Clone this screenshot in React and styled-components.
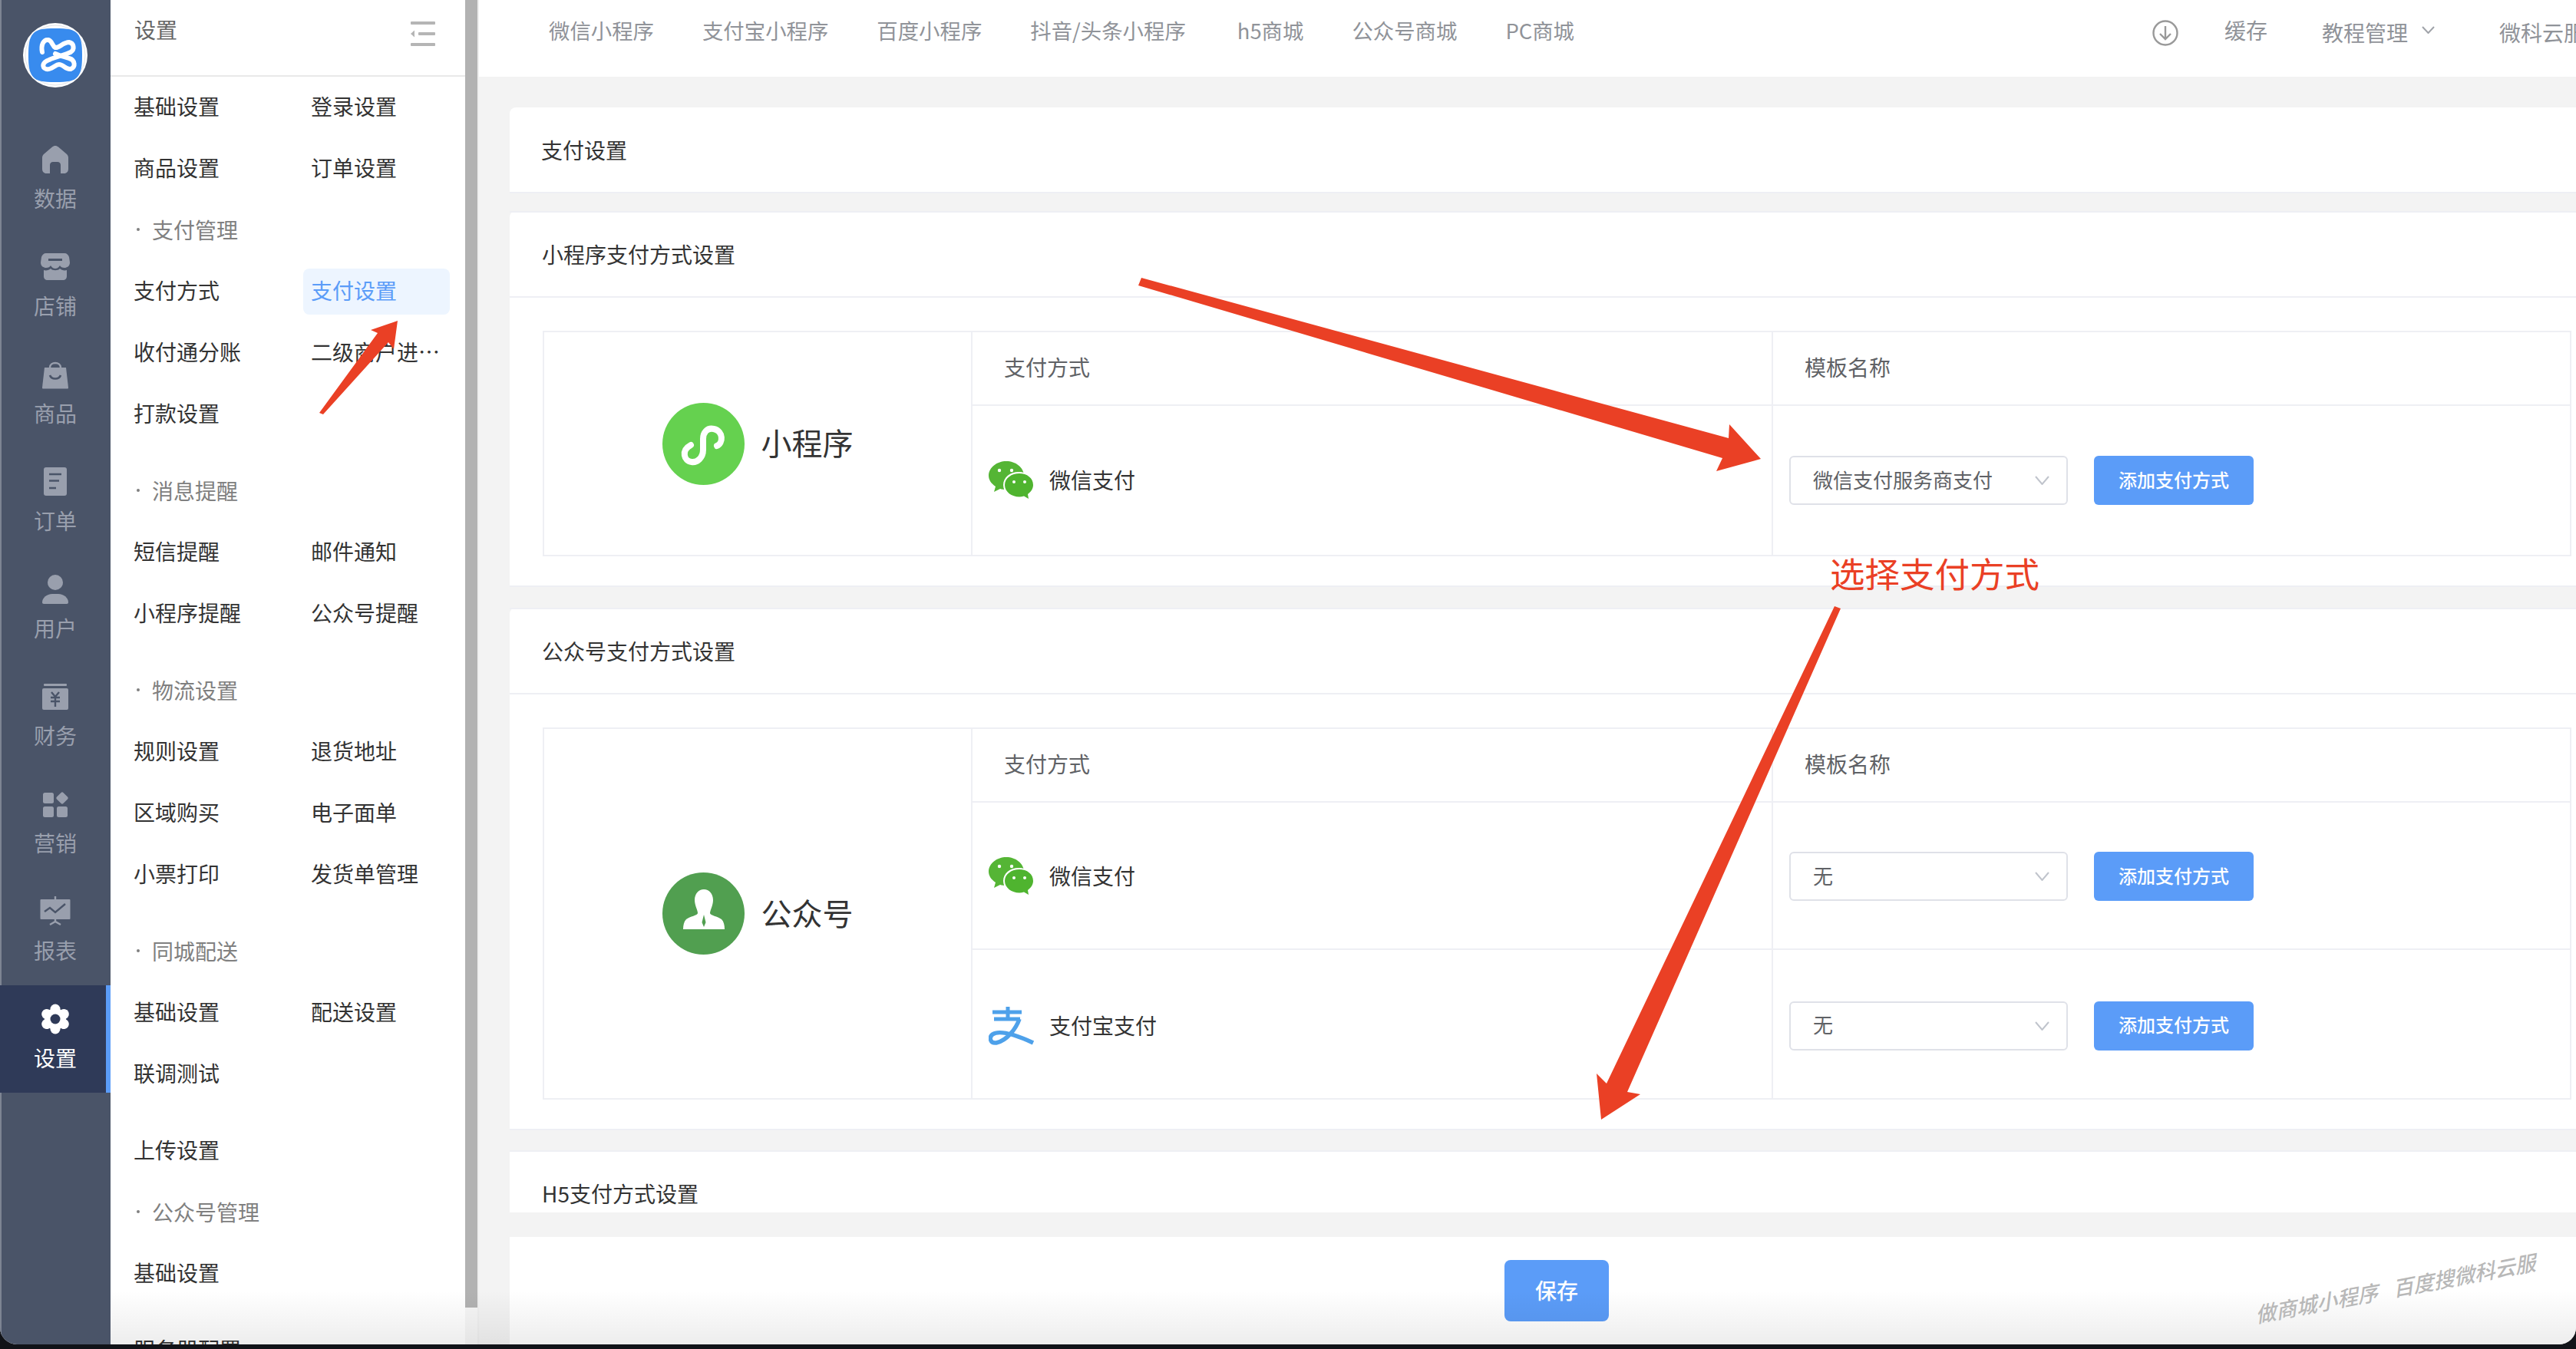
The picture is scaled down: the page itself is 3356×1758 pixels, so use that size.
import React from "react"
import styled, { createGlobalStyle } from "styled-components"

const GlobalStyle = createGlobalStyle`
  html, body {
    margin: 0;
    padding: 0;
    background: #111318;
  }
  * {
    box-sizing: border-box;
  }
`

const Screen = styled.div`
  position: relative;
  width: 3356px;
  height: 1758px;
  overflow: hidden;
  background: #111318;
  font-family: "Noto Sans CJK SC", "Noto Sans", sans-serif;
  font-size: 28px;
  line-height: 36px;
  color: #333;
`

const Window = styled.div`
  position: relative;
  display: flex;
  height: 1752px;
  overflow: hidden;
  border-radius: 0 0 22px 22px;
  background: #f3f3f3;

  &::after {
    content: "";
    position: absolute;
    left: 144px;
    right: 0;
    bottom: 0;
    height: 70px;
    background: linear-gradient(rgba(0, 0, 0, 0), rgba(0, 0, 0, 0.07));
    pointer-events: none;
  }
`

/* dark icon rail */
const Rail = styled.nav`
  --cut: #4a5468;
  flex: none;
  width: 144px;
  background: #4a5468;
  box-shadow: inset 2px 0 0 #7d8493;
`

const LogoWrap = styled.div`
  display: flex;
  justify-content: center;
  height: 164px;
  padding-top: 30px;
`

const RailItem = styled.div`
  --cut: ${p => (p.$active ? "#2f3a58" : "#4a5468")};
  display: flex;
  flex-direction: column;
  align-items: center;
  height: 140px;
  padding-top: 24px;
  color: ${p => (p.$active ? "#fff" : "#999fad")};
  background: ${p => (p.$active ? "#2f3a58" : "transparent")};
  box-shadow: ${p => (p.$active ? "inset -6px 0 0 #5b9cf8" : "none")};
`

const RailIconBox = styled.svg`
  width: 40px;
  height: 40px;
  flex: none;
  fill: currentColor;
`

const RailLabel = styled.span`
  margin-top: 12px;
`

/* second level menu */
const SubNav = styled.aside`
  flex: none;
  width: 462px;
  background: #fff;
`

const SubHeader = styled.div`
  display: flex;
  justify-content: space-between;
  height: 100px;
  padding: 20px 38px 0 31px;
  border-bottom: 2px solid #e9e9e9;
  color: #666;
`

const CollapseIcon = styled.svg`
  width: 34px;
  height: 34px;
  margin-top: 7px;
  fill: #b5b5b5;
`

const SubBody = styled.div`
  display: flex;
  flex-direction: column;
  gap: 40px;
  padding: 10px 0 0 20px;
`

const Group = styled.div`
  display: grid;
  grid-template-columns: 191px 191px;
  column-gap: 40px;
  row-gap: 20px;
`

const MenuItem = styled.div`
  height: 60px;
  padding: 0 11px 0 10px;
  line-height: 57px;
  border-radius: 8px;
  overflow: hidden;
  white-space: nowrap;
  text-overflow: ellipsis;
  color: ${p => (p.$active ? "#5b9cf8" : "#333")};
  background: ${p => (p.$active ? "#edf5ff" : "transparent")};
`

const MenuTitle = styled.div`
  grid-column: 1 / 3;
  display: flex;
  align-items: center;
  height: 60px;
  padding: 0 0 3px 11px;
  color: #808080;
`

const TitleDot = styled.i`
  width: 4px;
  height: 4px;
  margin: 0 16px 0 3px;
  border-radius: 50%;
  background: #808080;
`

const ScrollTrack = styled.div`
  flex: none;
  width: 18px;
  background: #f6f6f6;
  border-right: 2px solid #efefef;
`

const ScrollThumb = styled.div`
  width: 16px;
  height: 1704px;
  background: #b2b2b2;
`

/* main column */
const Main = styled.main`
  flex: 1;
  min-width: 0;
  display: flex;
  flex-direction: column;
`

const TopBar = styled.header`
  flex: none;
  display: flex;
  align-items: center;
  height: 100px;
  padding: 0 0 22px 91px;
  background: #fff;
  color: #909399;
`

const TopNav = styled.div`
  display: flex;
  gap: 63px;
  font-size: 27.4px;
  white-space: nowrap;

  & > span:nth-child(4) {
    margin-right: 4px;
  }
`

const TopRight = styled.div`
  display: flex;
  align-items: center;
  margin-left: auto;
  margin-right: -40px;
  white-space: nowrap;
`

const TopText = styled.span`
  margin-left: ${p => p.$gap}px;
  margin-top: ${p => (p.$low ? 6 : 0)}px;
`

const DownloadIcon = styled.svg`
  width: 34px;
  height: 34px;
  margin-top: 8px;
  fill: none;
  stroke: #999;
  stroke-width: 2.4;
`

const Chevron = styled.svg`
  flex: none;
  width: ${p => p.$w}px;
  height: ${p => p.$h}px;
  margin-left: ${p => p.$gap || 0}px;
  fill: none;
  stroke: ${p => p.$color};
  stroke-width: 2;
`

const Content = styled.div`
  flex: 1;
  min-height: 0;
  overflow: hidden;
  padding: 40px 0 0 40px;
`

const Card = styled.section`
  margin-bottom: ${p => p.$gap}px;
  background: #fff;
  border-radius: 8px 0 0 0;
  border-bottom: 2px solid #eeeff4;
`

const ClippedCard = styled.section`
  height: 81px;
  overflow: hidden;
  background: #fff;
  border-top: 2px solid #eeeff4;
`

const PageTitle = styled.div`
  height: 110px;
  padding-left: 41px;
  line-height: 110px;
`

const CardTitle = styled.div`
  height: 113px;
  padding-left: 42px;
  line-height: 108px;
  border-top: 2px solid #eeeff4;
  border-bottom: 2px solid #eeeff4;
`

const PlainTitle = styled.div`
  padding-left: 42px;
  line-height: 108px;
`

const CardBody = styled.div`
  padding: 43px 6px 38px 43px;
`

const PayTable = styled.div`
  display: flex;
  border: 2px solid #eeeff4;
`

const Channel = styled.div`
  flex: none;
  width: 558px;
  display: flex;
  align-items: center;
  justify-content: center;
  gap: 22px;
  font-size: 40px;
  line-height: 50px;
  border-right: 2px solid #eeeff4;
`

const ChannelIcon = styled.svg`
  width: 107px;
  height: 107px;
  flex: none;
`

const ChannelName = styled.span`
  margin-top: -4px;
`

const Rows = styled.div`
  flex: 1;
  min-width: 0;
`

const Row = styled.div`
  display: grid;
  grid-template-columns: 1041px 1fr;
  height: ${p => p.$height}px;
  border-bottom: ${p => (p.$last ? "none" : "2px solid #eeeff4")};
`

const HeadCell = styled.div`
  display: flex;
  align-items: center;
  padding: 0 0 4px 41px;
  color: #606266;

  & + & {
    border-left: 2px solid #eeeff4;
  }
`

const MethodCell = styled.div`
  display: flex;
  align-items: center;
  gap: 19px;
  padding: ${p => p.$shift}px 0 0 21px;
`

const MethodName = styled.span`
  margin-top: -2px;
`

const MethodIcon = styled.svg`
  width: 60px;
  height: 50px;
  flex: none;
`

const ActionCell = styled.div`
  display: flex;
  align-items: center;
  gap: 34px;
  padding: ${p => p.$shift}px 0 0 21px;
  border-left: 2px solid #eeeff4;
`

const Select = styled.div`
  display: flex;
  align-items: center;
  justify-content: space-between;
  width: 363px;
  height: 64px;
  padding: 0 22px 0 29px;
  font-size: 26px;
  color: #606266;
  background: #fff;
  border: 2px solid #dfe1e8;
  border-radius: 6px;
`

const SelectValue = styled.span`
  margin-top: -3px;
`

const AddButton = styled.button`
  width: 208px;
  height: 64px;
  padding: 0 0 3px;
  border: none;
  border-radius: 6px;
  font: inherit;
  font-size: 24px;
  font-weight: 500;
  color: #fff;
  background: #5b9cf8;
`

const Footer = styled.footer`
  flex: none;
  display: flex;
  justify-content: center;
  height: 140px;
  margin-left: 40px;
  padding: 30px 0 0 36px;
  background: #fff;
`

const SaveButton = styled.button`
  width: 136px;
  height: 80px;
  padding: 0 0 3px;
  border: none;
  border-radius: 8px;
  font: inherit;
  font-weight: 500;
  color: #fff;
  background: #5b9cf8;
`

/* things lying on top of the screenshot */
const Annotations = styled.svg`
  position: absolute;
  left: 0;
  top: 0;
  width: 3356px;
  height: 1758px;
  fill: #ea4025;
  pointer-events: none;
`

const Note = styled.div`
  position: absolute;
  left: 2384px;
  top: 720px;
  font-size: 45.5px;
  line-height: 52px;
  color: #ea4025;
  white-space: nowrap;
`

const Watermark = styled.div`
  position: absolute;
  left: 2938px;
  top: 1660px;
  font-size: 27px;
  font-weight: 500;
  word-spacing: 14px;
  color: #b8b8b8;
  white-space: nowrap;
  transform: rotate(-10.7deg) skewX(-18deg);
`

const railItems = [
  {
    label: "数据",
    icon: <path d="M20 2C21.5 2 22.8 2.6 24 3.6L34.5 12.5C36 13.8 37 15.5 37 17.5V32C37 35.5 35 38 31.5 38H27V27C27 24.5 25 23 23 23H17C15 23 13 24.5 13 27V38H8.5C5 38 3 35.5 3 32V17.5C3 15.5 4 13.8 5.5 12.5L16 3.6C17.2 2.6 18.5 2 20 2Z" />,
  },
  {
    label: "店铺",
    icon: (
      <>
        <path d="M8 2H32C35 2 37 4 38 7L39 14C39 19 35 21 32 21C29 21 27 20 26 18C24 21 22 22 20 22C18 22 16 21 14 18C13 20 11 21 8 21C5 21 1 19 1 14L2 7C3 4 5 2 8 2Z" />
        <rect x="11" y="9" width="18" height="3" fill="var(--cut)" />
        <path d="M5 24C8 25 12 24 14 22C16 25 24 25 26 22C28 24 32 25 35 24V32C35 35 33 37 30 37H10C7 37 5 35 5 32Z" />
      </>
    ),
  },
  {
    label: "商品",
    icon: (
      <>
        <path d="M6 11H34L37 37C37 38 36.5 38.5 36 38.5H4C3.5 38.5 3 38 3 37Z" />
        <path d="M13 11C13 3 27 3 27 11" fill="none" stroke="currentColor" strokeWidth="2.4" />
        <path d="M13 21C15 27 25 27 27 21" fill="none" stroke="var(--cut)" strokeWidth="2.6" />
      </>
    ),
  },
  {
    label: "订单",
    icon: (
      <>
        <rect x="5" y="1" width="30" height="37" rx="3" />
        <path d="M12 10H28M12 18.5H25M12 28H21" fill="none" stroke="var(--cut)" strokeWidth="2.4" />
      </>
    ),
  },
  {
    label: "用户",
    icon: (
      <>
        <circle cx="20" cy="11" r="10" />
        <path d="M3 37C3 31 9 26 16 26H24C31 26 37 31 37 37C37 38.2 36.2 39 35 39H5C3.8 39 3 38.2 3 37Z" />
      </>
    ),
  },
  {
    label: "财务",
    icon: (
      <>
        <rect x="5" y="3" width="30" height="3" rx="1" />
        <rect x="3" y="9" width="34" height="28" rx="2" />
        <path d="M15 14L20 20L25 14M14 21H26M14 26H26M20 20V33" fill="none" stroke="var(--cut)" strokeWidth="2.4" />
      </>
    ),
  },
  {
    label: "营销",
    icon: (
      <>
        <rect x="4" y="5" width="14" height="14" rx="2.5" />
        <rect x="4" y="23" width="14" height="14" rx="2.5" />
        <rect x="22" y="23" width="14" height="14" rx="2.5" />
        <rect x="23" y="6" width="12" height="12" rx="2" transform="rotate(45 29 12)" />
      </>
    ),
  },
  {
    label: "报表",
    icon: (
      <>
        <rect x="0.5" y="4" width="39" height="26" rx="1" />
        <path d="M6 20L13 15L20 21L33 10" fill="none" stroke="var(--cut)" strokeWidth="2.4" />
        <path d="M13 37L20 33L27 37M20 0V4M20 30V33" fill="none" stroke="currentColor" strokeWidth="2.4" />
      </>
    ),
  },
  {
    label: "设置",
    active: true,
    icon: (
      <>
        <circle cx="20" cy="20" r="14" />
        {[0, 60, 120, 180, 240, 300].map(a => (
          <circle key={a} cx="20" cy="7" r="6.5" transform={`rotate(${a} 20 20)`} />
        ))}
        <circle cx="20" cy="20" r="6.5" fill="var(--cut)" />
      </>
    ),
  },
]

const menuGroups = [
  [
    { text: "基础设置" },
    { text: "登录设置" },
    { text: "商品设置" },
    { text: "订单设置" },
    { title: "支付管理" },
    { text: "支付方式" },
    { text: "支付设置", active: true },
    { text: "收付通分账" },
    { text: "二级商户进件管理" },
    { text: "打款设置" },
  ],
  [
    { title: "消息提醒" },
    { text: "短信提醒" },
    { text: "邮件通知" },
    { text: "小程序提醒" },
    { text: "公众号提醒" },
  ],
  [
    { title: "物流设置" },
    { text: "规则设置" },
    { text: "退货地址" },
    { text: "区域购买" },
    { text: "电子面单" },
    { text: "小票打印" },
    { text: "发货单管理" },
  ],
  [
    { title: "同城配送" },
    { text: "基础设置" },
    { text: "配送设置" },
    { text: "联调测试" },
  ],
  [
    { text: "上传设置" },
    { blank: true },
    { title: "公众号管理" },
    { text: "基础设置" },
  ],
  [{ text: "服务器配置" }],
]

const topNav = ["微信小程序", "支付宝小程序", "百度小程序", "抖音/头条小程序", "h5商城", "公众号商城", "PC商城"]

function Logo() {
  return (
    <svg width="84" height="84" viewBox="0 0 84 84">
      <circle cx="42" cy="42" r="42" fill="#fff" />
      <circle cx="42" cy="42" r="39" fill="none" stroke="#d8dbe0" strokeWidth="0.8" />
      <path d="M42 7C58 7 66 8 71 14C76 20 77 28 77 42C77 56 76 64 71 70C66 76 58 77 42 77C26 77 18 76 13 70C8 64 7 56 7 42C7 28 8 20 13 14C18 8 26 7 42 7Z" fill="#388bee" />
      <path d="M25 38C23 28 27 21 33 22C38 23 38 30 42 32C47 33 52 25 60 25C66 26 68 34 62 38C54 42 42 44 34 48C25 51 24 58 30 60C36 62 42 54 47 54C53 54 55 61 62 60C69 58 68 48 60 46C55 44 48 43 42 40" fill="none" stroke="#fff" strokeWidth="6" strokeLinecap="round" strokeLinejoin="round" />
    </svg>
  )
}

function MiniProgramIcon() {
  return (
    <ChannelIcon viewBox="0 0 107 107">
      <circle cx="53.5" cy="53.5" r="53.5" fill="#65d14f" />
      <path d="M71 56C79 53 80 37 67 34C58 32 53 39 53 47V61C53 72 45 78 38 77C28 76 24 62 37 55" fill="none" stroke="#fff" strokeWidth="8" strokeLinecap="round" />
    </ChannelIcon>
  )
}

function OfficialIcon() {
  return (
    <ChannelIcon viewBox="0 0 107 107">
      <circle cx="53.5" cy="53.5" r="53.5" fill="#519f50" />
      <path d="M54 22C61 22 66 28 66 36C66 43 62 49 62 53C62 56 72 57 77 61C80 64 81 69 81 74H27C27 69 28 64 31 61C36 57 46 56 46 53C46 49 42 43 42 36C42 28 47 22 54 22Z" fill="#fff" />
      <path d="M54 55L56.5 65L54 71L51.5 65Z" fill="#519f50" />
    </ChannelIcon>
  )
}

function WechatIcon() {
  return (
    <MethodIcon viewBox="0 0 60 50">
      <path d="M23 0C35 0 46 8 46 19C46 30 35 37 23 37C20 37 17 36.6 15 36L7 40L9 33C3 29 0 24 0 19C0 8 11 0 23 0Z" fill="#55b535" />
      <path d="M39 14C50 14 60 21 60 31C60 36 57 40 53 43L55 50L48 46C45 47 42 48 39 48C28 48 19 41 19 31C19 21 28 14 39 14Z" fill="#fff" />
      <path d="M40 16C50 16 58 22 58 31C58 36 55 40 51 43L52 49L46 45.5C44 46 42 46.5 40 46.5C30 46.5 21 40 21 31C21 22 30 16 40 16Z" fill="#4fb42f" />
      <circle cx="14" cy="12" r="2.2" fill="#fff" />
      <circle cx="30" cy="12" r="2.2" fill="#fff" />
      <circle cx="33" cy="27" r="2" fill="#fff" />
      <circle cx="47" cy="27" r="2" fill="#fff" />
    </MethodIcon>
  )
}

function AlipayIcon() {
  return (
    <MethodIcon viewBox="0 0 60 50">
      <path d="M25 0V16M5 7H43M7 16H41" fill="none" stroke="#4ea1ea" strokeWidth="5" />
      <path d="M40 16C36 28 24 44 10 47C2 48 0 40 5 36C14 30 34 36 58 47" fill="none" stroke="#4ea1ea" strokeWidth="5.5" />
    </MethodIcon>
  )
}

function TinyDown() {
  return (
    <Chevron $w={19} $h={12} $color="#c0c4cc" viewBox="0 0 19 12">
      <path d="M1 1L9.5 11L18 1" />
    </Chevron>
  )
}

function PayRow({ icon, name, value, height, last, shift = 0 }) {
  return (
    <Row $height={height} $last={last}>
      <MethodCell $shift={shift}>
        {icon}
        <MethodName>{name}</MethodName>
      </MethodCell>
      <ActionCell $shift={shift}>
        <Select>
          <SelectValue>{value}</SelectValue>
          <TinyDown />
        </Select>
        <AddButton>添加支付方式</AddButton>
      </ActionCell>
    </Row>
  )
}

function HeadRow() {
  return (
    <Row $height={96}>
      <HeadCell>支付方式</HeadCell>
      <HeadCell>模板名称</HeadCell>
    </Row>
  )
}

export default function App() {
  return (
    <Screen>
      <GlobalStyle />
      <Window>
        <Rail>
          <LogoWrap>
            <Logo />
          </LogoWrap>
          {railItems.map(item => (
            <RailItem key={item.label} $active={item.active}>
              <RailIconBox viewBox="0 0 40 40">{item.icon}</RailIconBox>
              <RailLabel>{item.label}</RailLabel>
            </RailItem>
          ))}
        </Rail>

        <SubNav>
          <SubHeader>
            <span>设置</span>
            <CollapseIcon viewBox="0 0 34 34">
              <rect x="1" y="1" width="32" height="4" rx="1" />
              <rect x="11" y="15" width="22" height="4" rx="1" />
              <rect x="1" y="29" width="32" height="4" rx="1" />
              <path d="M6 12.5V21.5L1 17Z" />
            </CollapseIcon>
          </SubHeader>
          <SubBody>
            {menuGroups.map((group, idx) => (
              <Group key={idx}>
                {group.map((el, i) => {
                  if (el.blank) return <span key={i} />
                  if (el.title) {
                    return (
                      <MenuTitle key={i}>
                        <TitleDot />
                        {el.title}
                      </MenuTitle>
                    )
                  }
                  return (
                    <MenuItem key={i} $active={el.active}>
                      {el.text}
                    </MenuItem>
                  )
                })}
              </Group>
            ))}
          </SubBody>
        </SubNav>

        <ScrollTrack>
          <ScrollThumb />
        </ScrollTrack>

        <Main>
          <TopBar>
            <TopNav>
              {topNav.map(t => (
                <span key={t}>{t}</span>
              ))}
            </TopNav>
            <TopRight>
              <DownloadIcon viewBox="0 0 34 34">
                <circle cx="17" cy="17" r="15.5" />
                <path d="M17 8V25M10 18L17 25L24 18" />
              </DownloadIcon>
              <TopText $gap={60}>缓存</TopText>
              <TopText $gap={71} $low>教程管理</TopText>
              <Chevron $w={17} $h={10} $gap={18} $color="#a0a3a9" viewBox="0 0 17 10">
                <path d="M1 1L8.5 9L16 1" />
              </Chevron>
              <TopText $gap={84} $low>微科云服务</TopText>
            </TopRight>
          </TopBar>

          <Content>
            <Card $gap={23}>
              <PageTitle>支付设置</PageTitle>
            </Card>

            <Card $gap={27}>
              <CardTitle>小程序支付方式设置</CardTitle>
              <CardBody>
                <PayTable>
                  <Channel>
                    <MiniProgramIcon />
                    <ChannelName>小程序</ChannelName>
                  </Channel>
                  <Rows>
                    <HeadRow />
                    <PayRow icon={<WechatIcon />} name="微信支付" value="微信支付服务商支付" height={194} last />
                  </Rows>
                </PayTable>
              </CardBody>
            </Card>

            <Card $gap={26}>
              <CardTitle>公众号支付方式设置</CardTitle>
              <CardBody>
                <PayTable>
                  <Channel>
                    <OfficialIcon />
                    <ChannelName>公众号</ChannelName>
                  </Channel>
                  <Rows>
                    <HeadRow />
                    <PayRow icon={<WechatIcon />} name="微信支付" value="无" height={192} shift={2} />
                    <PayRow icon={<AlipayIcon />} name="支付宝支付" value="无" height={193} last shift={4} />
                  </Rows>
                </PayTable>
              </CardBody>
            </Card>

            <ClippedCard>
              <PlainTitle>H5支付方式设置</PlainTitle>
            </ClippedCard>
          </Content>

          <Footer>
            <SaveButton>保存</SaveButton>
          </Footer>
        </Main>
      </Window>

      <Annotations viewBox="0 0 3356 1758">
        <polygon points="416,538 492,434 483,430 518,418 513,455 506,446 421,540" />
        <polygon points="1487,362 2252,571 2253,553 2294,598 2236,614 2244,597 1483,372" />
        <polygon points="2390,790 2398,793 2120,1423 2137,1426 2086,1459 2080,1399 2093,1412" />
      </Annotations>
      <Note>选择支付方式</Note>
      <Watermark>做商城小程序 百度搜微科云服</Watermark>
    </Screen>
  )
}
